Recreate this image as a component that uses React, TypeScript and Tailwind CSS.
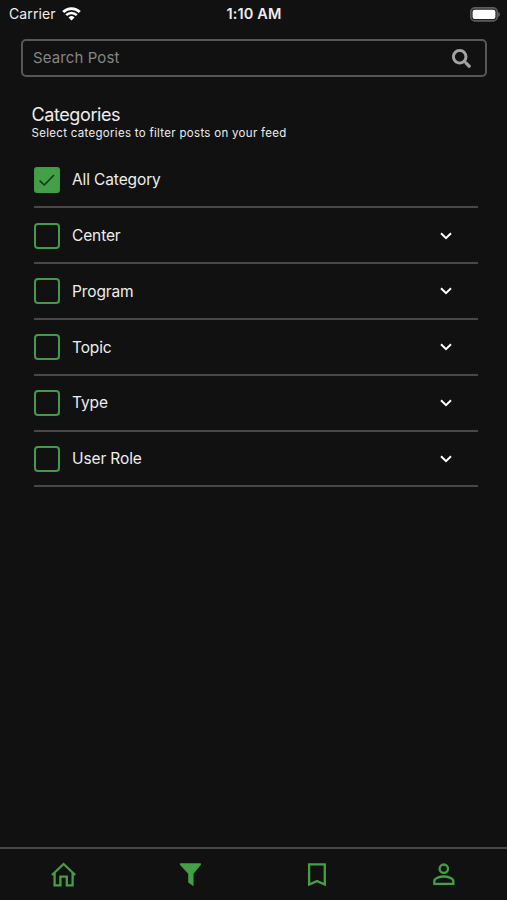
import { clsx } from "clsx";
import type { ReactNode } from "react";

const CATEGORIES = [
  { label: "All Category", checked: true, expandable: false },
  { label: "Center", checked: false, expandable: true },
  { label: "Program", checked: false, expandable: true },
  { label: "Topic", checked: false, expandable: true },
  { label: "Type", checked: false, expandable: true },
  { label: "User Role", checked: false, expandable: true },
];

function StatusBar() {
  return (
    <header className="grid h-7 grid-cols-3 items-center pr-[7px] pl-[9px] text-[14px] leading-7">
      <div className="flex items-center gap-[6px]">
        <span className="tracking-[0.1px]">Carrier</span>
        <svg width="19" height="14" viewBox="0 0 19 14" fill="none" aria-hidden>
          <path d="M1.2 5.1a11.8 11.8 0 0 1 16.6 0" stroke="#fff" strokeWidth="2.8" />
          <path d="M4.2 8.2a7.5 7.5 0 0 1 10.6 0" stroke="#fff" strokeWidth="2.5" />
          <path d="M9.5 13.6 6.5 10.5a4.3 4.3 0 0 1 6 0Z" fill="#fff" />
        </svg>
      </div>
      <span className="pr-px text-center text-[14.5px] font-semibold tracking-[0.15px]">1:10 AM</span>
      <svg className="justify-self-end" width="30" height="15" viewBox="0 0 30 15" aria-hidden>
        <rect x="0.8" y="0.9" width="26.4" height="13" rx="4" fill="#222" stroke="#5c5c5c" strokeWidth="1.6" />
        <rect x="2.6" y="2.7" width="22.8" height="9.4" rx="2" fill="#fff" />
        <path d="M28.2 5.1c2.2.8 2.2 3.8 0 4.6Z" fill="#686868" />
      </svg>
    </header>
  );
}

function SearchBox() {
  return (
    <div className="mt-[11px] mr-[20px] ml-[21px] flex h-[38px] items-center justify-between rounded-[5px] border-2 border-[#575757] pr-[14px] pl-[10px]">
      <span className="text-[15px] tracking-[0.1px] text-[#858585]">Search Post</span>
      <svg width="19" height="19" viewBox="0 0 512 512" fill="#a3a3a3" aria-hidden>
        <path d="M505 442.7 405.3 343c-4.5-4.5-10.6-7-17-7H372c27.6-35.3 44-79.7 44-128C416 93.1 322.9 0 208 0S0 93.1 0 208s93.1 208 208 208c48.3 0 92.7-16.4 128-44v16.3c0 6.4 2.5 12.5 7 17l99.7 99.7c9.4 9.4 24.6 9.4 33.9 0l28.3-28.3c9.4-9.4 9.4-24.6.1-34ZM208 336c-70.7 0-128-57.2-128-128 0-70.7 57.2-128 128-128 70.7 0 128 57.2 128 128 0 70.7-57.2 128-128 128Z" />
      </svg>
    </div>
  );
}

function Checkbox({ checked }: { checked: boolean }) {
  return (
    <span
      role="checkbox"
      aria-checked={checked}
      className={clsx(
        "flex size-[26px] items-center justify-center border-2 border-[#419b48]",
        checked ? "rounded-[3px] bg-[#43a047]" : "rounded-[4px]",
      )}
    >
      {checked ? (
        <svg className="shrink-0" width="18" height="14" viewBox="0 0 18 14" fill="none" aria-hidden>
          <path d="m1.6 7.6 4.7 4.4L16 2" stroke="#14351a" strokeWidth="1.6" />
        </svg>
      ) : null}
    </span>
  );
}

function CategoryRow({ label, checked, expandable }: (typeof CATEGORIES)[number]) {
  return (
    <li className="flex h-[55.8px] items-center border-b-2 border-[#474747] pt-[0.8px] pr-[26px]">
      <Checkbox checked={checked} />
      <span className="ml-3 flex-1 text-[15.5px] tracking-[-0.12px]">{label}</span>
      {expandable ? (
        <svg width="12" height="8" viewBox="0 0 12 8" fill="none" aria-hidden>
          <path d="m1 1.2 5 4.9 5-4.9" stroke="#fff" strokeWidth="2" />
        </svg>
      ) : null}
    </li>
  );
}

function Tab({ label, children }: { label: string; children: ReactNode }) {
  return (
    <button type="button" aria-label={label} className="flex items-center justify-center">
      <svg width="26" height="26" viewBox="0 0 26 26" fill="none" stroke="#43a047" strokeWidth="2.3">
        {children}
      </svg>
    </button>
  );
}

function TabBar() {
  return (
    <nav className="grid h-[53px] grid-cols-4 border-t-2 border-[#474747]">
      <Tab label="Home">
        <path d="M2 13 13.6 2l11.6 11M4.6 11.1v12.2h5.8v-8.6h6.4v8.6h5.8V11.1" />
      </Tab>
      <Tab label="Filter">
        <path d="M2.9 1.2h21v1.6l-7.4 9V24.2l-5.3-3.6v-8.8L2.9 2.8Z" fill="#43a047" stroke="none" />
      </Tab>
      <Tab label="Saved">
        <path d="M5.1 2.4h15.7v20.1L13 19.1l-7.900 3.400Z" />
      </Tab>
      <Tab label="Profile">
        <circle cx="12.8" cy="6.700" r="4.200" />
        <path d="M3.300 21.800V19c0-3 6.200-4.500 9.500-4.500s9.500 1.500 9.500 4.500v2.800Z" />
      </Tab>
    </nav>
  );
}

export default function App() {
  return (
    <div className="flex h-[900px] w-[507px] flex-col bg-[#111] font-['Inter','Liberation_Sans',sans-serif] text-[#eee]">
      <StatusBar />
      <SearchBox />
      <main className="flex-1 pt-[27px]">
        <div className="pl-[31.5px]">
          <h1 className="text-[18px] leading-[22px] tracking-[-0.4px]">Categories</h1>
          <p className="text-[11.5px] leading-[14px] tracking-[0.3px]">
            Select categories to filter posts on your feed
          </p>
        </div>
        <ul className="mt-[12.6px] mr-[29px] ml-[34px]">
          {CATEGORIES.map((category) => (
            <CategoryRow key={category.label} {...category} />
          ))}
        </ul>
      </main>
      <TabBar />
    </div>
  );
}
